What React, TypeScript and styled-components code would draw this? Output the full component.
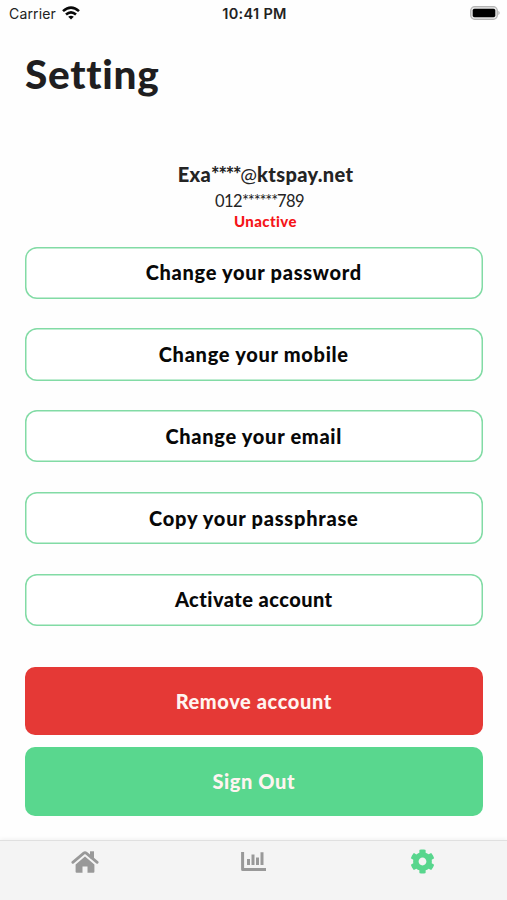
import React from 'react';
import styled, { createGlobalStyle } from 'styled-components';
import { FaCog } from 'react-icons/fa';

const GlobalStyle = createGlobalStyle`
  * { box-sizing: border-box; }
  body { margin: 0; background: #fff; }
`;

const Screen = styled.main`
  width: 507px;
  height: 900px;
  display: flex;
  flex-direction: column;
  overflow: hidden;
  background: #fefefe;
  font-family: Lato, "Liberation Sans", sans-serif;
  font-variant-ligatures: none;
`;

const StatusBar = styled.header`
  height: 28px;
  padding: 0 7px 0 9px;
  display: grid;
  grid-template-columns: 1fr auto 1fr;
  align-items: center;
  font-family: Inter, sans-serif;
  color: #222;
`;

const Network = styled.div`
  display: flex;
  align-items: center;
  gap: 6px;
  font-size: 14px;
  line-height: 28px;
  letter-spacing: 0.15px;
  svg { margin-top: -3px; }
`;

const Clock = styled.time`
  padding-bottom: 1px;
  font-size: 14.5px;
  font-weight: 600;
  letter-spacing: 0.3px;
`;

const Battery = styled.svg`
  justify-self: end;
  margin-top: -2px;
`;

const Title = styled.h1`
  margin: 17px 0 0 25px;
  height: 57px;
  font-size: 40.5px;
  line-height: 57px;
  font-weight: 900;
  letter-spacing: 0.75px;
  color: #1f1e20;
`;

const Profile = styled.section`
  margin-top: 60px;
  display: flex;
  flex-direction: column;
  align-items: center;
  color: #242424;
`;

const Email = styled.div`
  padding-left: 24px;
  font-size: 20px;
  line-height: 24px;
  font-weight: 900;
  letter-spacing: 0.35px;
`;

const EmailMask = styled.span`
  letter-spacing: -1.2px;
`;

const AtSign = styled.span`
  font-weight: 400;
  letter-spacing: 0;
`;

const Phone = styled.div`
  margin-top: 5px;
  padding-left: 12px;
  font-size: 16.5px;
  line-height: 20px;
  letter-spacing: -0.6px;
`;

const PhoneMask = styled.span`
  letter-spacing: -1.15px;
`;

const State = styled.div`
  padding-left: 24px;
  font-size: 15px;
  line-height: 20px;
  font-weight: 900;
  letter-spacing: 0.4px;
  color: #f51518;
`;

const Options = styled.div`
  margin: 15.5px 24.5px 0 25px;
  display: flex;
  flex-direction: column;
  gap: 29.5px;
`;

const Option = styled.button<{ $spacing: number }>`
  height: 52.3px;
  padding: 0 0 1px;
  border: 0;
  border-radius: 12px;
  background: #fff;
  box-shadow: inset 0 0 0 1.5px #82dba5;
  color: #080808;
  font: 900 20px/24px Lato, sans-serif;
  letter-spacing: ${({ $spacing }) => $spacing}px;
`;

const Actions = styled.div`
  margin: 41px 24.5px 0 25px;
  display: flex;
  flex-direction: column;
  gap: 12px;
`;

const Action = styled.button<{ $color: string }>`
  height: 68.5px;
  padding: 0 0 1px;
  border: 0;
  border-radius: 10px;
  background: ${({ $color }) => $color};
  color: #fff4f0;
  font: 900 20px/24px Lato, sans-serif;
  letter-spacing: 0.6px;
`;

const TabBar = styled.nav`
  height: 60px;
  margin-top: auto;
  display: grid;
  grid-template-columns: repeat(3, 1fr);
  background: #f4f4f4;
  border-top: 1px solid #e0e0e0;
  box-shadow: 0 -1px 4px rgba(0, 0, 0, 0.06);
`;

const Tab = styled.a<{ $active?: boolean }>`
  height: 41px;
  display: flex;
  align-items: center;
  justify-content: center;
  color: ${({ $active }) => ($active ? '#58d68d' : '#999')};
`;

const options = [
  { label: 'Change your password', spacing: 0.7 },
  { label: 'Change your mobile', spacing: 0.7 },
  { label: 'Change your email', spacing: 0.7 },
  { label: 'Copy your passphrase', spacing: 0.75 },
  { label: 'Activate account', spacing: 0.45 },
];

const HomeIcon = () => (
  <svg width="28" height="22" viewBox="0 0 28 22" fill="currentColor">
    <path d="M19 0.3h4v7h-4z" />
    <path d="M1.8 11.4L12.8 2.1Q14 1.1 15.2 2.1L26.2 11.4" fill="none" stroke="currentColor" strokeWidth="2.7" strokeLinecap="round" />
    <path d="M14 5.6L23.4 13.4V20.8Q23.4 21.8 22.4 21.8H16.5V15.6H11.5V21.8H5.6Q4.6 21.8 4.6 20.8V13.4Z" />
  </svg>
);

const ChartIcon = () => (
  <svg width="25" height="19" viewBox="0 0 25 19" fill="none" stroke="currentColor" strokeWidth="3">
    <path d="M1.6 0V17.4H25" strokeLinejoin="round" />
    <path d="M7.5 7V13M12 2.4V13M16.5 5.6V13M21 0.3V13" />
  </svg>
);

export default function App() {
  return (
    <Screen>
      <GlobalStyle />
      <StatusBar>
        <Network>
          Carrier
          <svg width="18" height="14" viewBox="0 0 18 14" fill="none" stroke="#080808" strokeWidth="2.6">
            <path d="M1 5.1Q9-2 17 5.1M4 8.5Q9 4.1 14 8.5" />
            <path d="M6.2 10.8Q9 8.5 11.8 10.8L9 13.6Z" fill="#080808" stroke="none" />
          </svg>
        </Network>
        <Clock>10:41 PM</Clock>
        <Battery width="30" height="14" viewBox="0 0 30 14">
          <rect x="0.7" y="0.7" width="26.6" height="12.6" rx="4" fill="#e5e5e5" stroke="#b4b4b4" strokeWidth="1.3" />
          <rect x="2.7" y="2.7" width="22.6" height="8.6" rx="1.8" fill="#000" />
          <path d="M28.3 4.8Q31.2 7 28.3 9.2Z" fill="#b4b4b4" />
        </Battery>
      </StatusBar>
      <Title>Setting</Title>
      <Profile>
        <Email>Exa<EmailMask>****</EmailMask><AtSign>@</AtSign>ktspay.net</Email>
        <Phone>012<PhoneMask>******</PhoneMask>789</Phone>
        <State>Unactive</State>
      </Profile>
      <Options>
        {options.map(({ label, spacing }) => <Option key={label} $spacing={spacing}>{label}</Option>)}
      </Options>
      <Actions>
        <Action $color="#e53936">Remove account</Action>
        <Action $color="#59d78e">Sign Out</Action>
      </Actions>
      <TabBar>
        <Tab aria-label="Home"><HomeIcon /></Tab>
        <Tab aria-label="Statistics"><ChartIcon /></Tab>
        <Tab aria-label="Settings" $active><FaCog size={25} /></Tab>
      </TabBar>
    </Screen>
  );
}
